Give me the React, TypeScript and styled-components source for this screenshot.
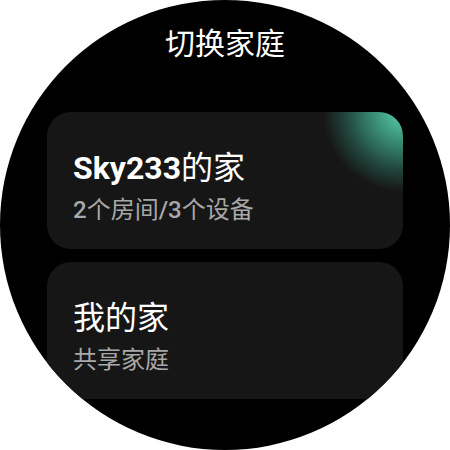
import React from "react";
import styled, { createGlobalStyle } from "styled-components";

const Global = createGlobalStyle`
  html, body { margin: 0; padding: 0; background: #ffffff; }
  body { font-family: Roboto, "Noto Sans CJK SC", sans-serif; }
`;

const Watch = styled.div`
  width: 450px;
  height: 450px;
  border-radius: 50%;
  background: #000;
  overflow: hidden;
  display: flex;
  flex-direction: column;
  align-items: center;
`;

const Title = styled.h1`
  margin: 0;
  padding-top: 24px;
  height: 40px;
  line-height: 40px;
  font-size: 30px;
  font-weight: 400;
  color: #fff;
  font-family: Roboto, "Noto Sans CJK SC", sans-serif;
`;

const List = styled.div`
  margin-top: 48px;
  width: 356px;
  height: 288px;
  overflow: hidden;
  display: flex;
  flex-direction: column;
  gap: 13px;
`;

const Card = styled.div<{ $glow?: boolean }>`
  flex: 0 0 auto;
  height: 137px;
  box-sizing: border-box;
  border-radius: 24px;
  padding: 34px 26px 0;
  background: ${(p) =>
    p.$glow
      ? "radial-gradient(circle 80px at 100% 0%, #58cdaa 0%, #48ad8f 20%, #337d69 45%, #22463c 72%, #161616 100%)"
      : "#161616"};
  display: flex;
  flex-direction: column;
`;

const Name = styled.div`
  font-size: 32px;
  line-height: 44px;
  color: #fff;
  font-weight: 400;
`;

const Sub = styled.div`
  margin-top: 4px;
  font-size: 24px;
  line-height: 32px;
  color: #a8a8a8;
  font-weight: 400;
`;

const Latin = styled.span<{ $weight: number }>`
  font-family: Roboto, sans-serif;
  font-weight: ${(p) => p.$weight};
`;

export default function App() {
  return (
    <>
      <Global />
      <Watch>
        <Title>切换家庭</Title>
        <List>
          <Card $glow>
            <Name>
              <Latin $weight={700}>Sky233</Latin>的家
            </Name>
            <Sub>
              <Latin $weight={500}>2</Latin>个房间
              <Latin $weight={500}>/3</Latin>个设备
            </Sub>
          </Card>
          <Card>
            <Name>我的家</Name>
            <Sub>共享家庭</Sub>
          </Card>
        </List>
      </Watch>
    </>
  );
}
